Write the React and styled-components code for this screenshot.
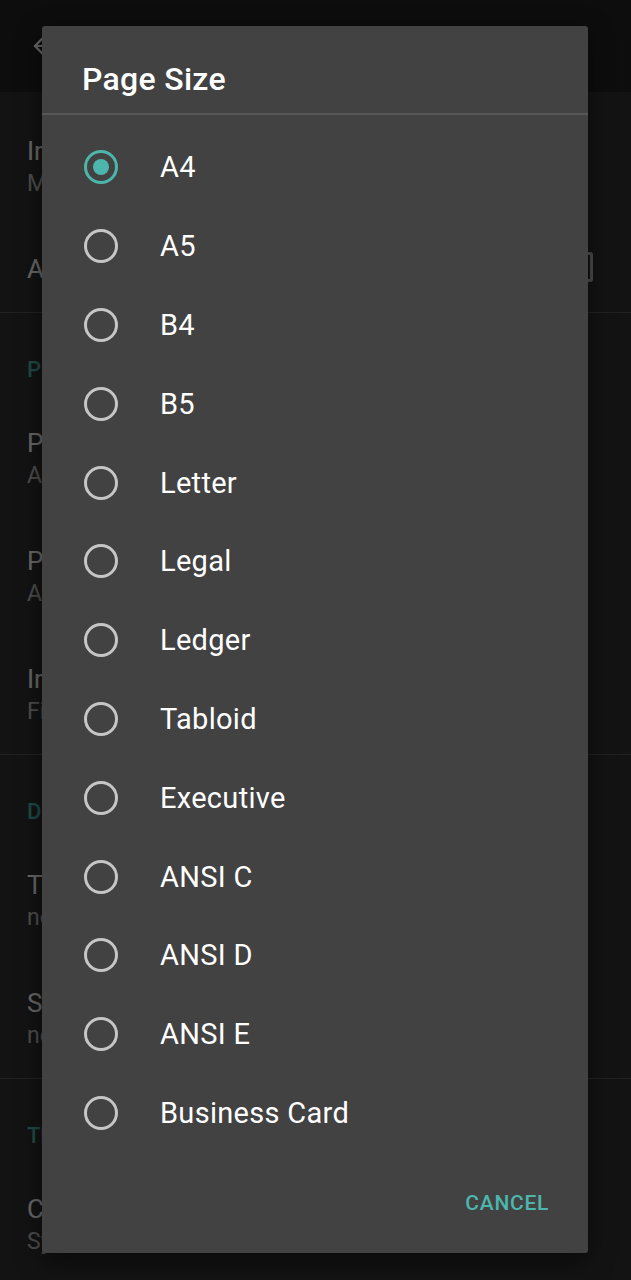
import React from 'react';
import styled, { createGlobalStyle } from 'styled-components';

const GlobalStyle = createGlobalStyle`
  html, body {
    margin: 0;
    padding: 0;
    background: #303030;
    font-family: Roboto, "Noto Sans", sans-serif;
  }
  * { box-sizing: border-box; }
`;

const Screen = styled.div`
  position: relative;
  width: 631px;
  height: 1280px;
  overflow: hidden;
  background: #303030;
`;

const AppBar = styled.div`
  height: 92px;
  background: #212121;
  display: flex;
  align-items: center;
  padding-left: 29px;
`;

const Section = styled.div`
  padding-top: ${props => (props.first ? '16px' : '0')};
  border-bottom: ${props => (props.last ? 'none' : '1px solid #555')};
`;

const SectionHeader = styled.div`
  height: 87px;
  padding-top: 44px;
  padding-left: 27px;
  font-size: 22px;
  line-height: 26px;
  font-weight: 500;
  color: #4db6ac;
`;

const PrefRow = styled.div`
  height: ${props => (props.single ? '86px' : '118px')};
  display: flex;
  align-items: center;
  padding: 0 38px 0 27px;
  justify-content: space-between;
`;

const PrefText = styled.div`
  display: flex;
  flex-direction: column;
  gap: 4px;
`;

const PrefTitle = styled.div`
  font-size: 26px;
  line-height: 30px;
  color: #ffffff;
`;

const PrefSummary = styled.div`
  font-size: 23px;
  line-height: 28px;
  color: rgba(255, 255, 255, 0.7);
`;

const CheckBox = styled.div`
  width: 30px;
  height: 30px;
  border: 3px solid rgba(255, 255, 255, 0.7);
  border-radius: 3px;
  margin-top: -4px;
`;

const Scrim = styled.div`
  position: absolute;
  inset: 0;
  background: rgba(0, 0, 0, 0.6);
`;

const Dialog = styled.div`
  position: absolute;
  top: 26px;
  left: 42px;
  width: 546px;
  height: 1227px;
  background: #424242;
  border-radius: 3px;
  box-shadow: 0 8px 24px rgba(0, 0, 0, 0.5);
  display: flex;
  flex-direction: column;
`;

const DialogTitle = styled.div`
  height: 89px;
  padding: 34px 40px 0;
  font-size: 32px;
  font-weight: 500;
  letter-spacing: 0.3px;
  color: #ffffff;
  line-height: 38px;
  border-bottom: 2px solid #575757;
`;

const OptionList = styled.div`
  padding-top: 13px;
  display: flex;
  flex-direction: column;
`;

const Option = styled.div`
  height: 78.8px;
  display: flex;
  align-items: center;
  padding-left: 42px;
  gap: 42px;
`;

const Radio = styled.div`
  width: 34px;
  height: 34px;
  border-radius: 50%;
  border: 3px solid ${props => (props.checked ? '#4db6ac' : '#c6c6c6')};
  display: flex;
  align-items: center;
  justify-content: center;
  flex-shrink: 0;

  &::after {
    content: '';
    display: ${props => (props.checked ? 'block' : 'none')};
    width: 16px;
    height: 16px;
    border-radius: 50%;
    background: #4db6ac;
  }
`;

const OptionLabel = styled.div`
  font-size: 29px;
  letter-spacing: 0.3px;
  color: #ffffff;
`;

const Actions = styled.div`
  flex: 1;
  display: flex;
  align-items: center;
  justify-content: flex-end;
  padding-right: 39px;
`;

const TextButton = styled.div`
  font-size: 21px;
  font-weight: 500;
  letter-spacing: 0.7px;
  color: #4db6ac;
`;

const sizes = [
  'A4', 'A5', 'B4', 'B5', 'Letter', 'Legal', 'Ledger', 'Tabloid',
  'Executive', 'ANSI C', 'ANSI D', 'ANSI E', 'Business Card',
];

export default function App() {
  return (
    <Screen>
      <GlobalStyle />
      <AppBar>
        <svg width="26" height="26" viewBox="0 0 24 24" fill="#fff">
          <path d="M20 11H7.83l5.59-5.59L12 4l-8 8 8 8 1.41-1.41L7.83 13H20v-2z" />
        </svg>
      </AppBar>

      <Section first>
        <PrefRow>
          <PrefText>
            <PrefTitle>Image Quality</PrefTitle>
            <PrefSummary>Medium</PrefSummary>
          </PrefText>
        </PrefRow>
        <PrefRow single>
          <PrefTitle>Auto Rotate</PrefTitle>
          <CheckBox />
        </PrefRow>
      </Section>

      <Section>
        <SectionHeader>Page</SectionHeader>
        <PrefRow>
          <PrefText>
            <PrefTitle>Page Size</PrefTitle>
            <PrefSummary>A4</PrefSummary>
          </PrefText>
        </PrefRow>
        <PrefRow>
          <PrefText>
            <PrefTitle>Page Orientation</PrefTitle>
            <PrefSummary>Auto</PrefSummary>
          </PrefText>
        </PrefRow>
        <PrefRow>
          <PrefText>
            <PrefTitle>Image Fit</PrefTitle>
            <PrefSummary>Fit to page</PrefSummary>
          </PrefText>
        </PrefRow>
      </Section>

      <Section>
        <SectionHeader>Document</SectionHeader>
        <PrefRow>
          <PrefText>
            <PrefTitle>Title</PrefTitle>
            <PrefSummary>none</PrefSummary>
          </PrefText>
        </PrefRow>
        <PrefRow>
          <PrefText>
            <PrefTitle>Subject</PrefTitle>
            <PrefSummary>none</PrefSummary>
          </PrefText>
        </PrefRow>
      </Section>

      <Section last>
        <SectionHeader>Theme</SectionHeader>
        <PrefRow>
          <PrefText>
            <PrefTitle>Color</PrefTitle>
            <PrefSummary>System default</PrefSummary>
          </PrefText>
        </PrefRow>
      </Section>

      <Scrim />

      <Dialog>
        <DialogTitle>Page Size</DialogTitle>
        <OptionList>
          {sizes.map((s, i) => (
            <Option key={s}>
              <Radio checked={i === 0} />
              <OptionLabel>{s}</OptionLabel>
            </Option>
          ))}
        </OptionList>
        <Actions>
          <TextButton>CANCEL</TextButton>
        </Actions>
      </Dialog>
    </Screen>
  );
}
